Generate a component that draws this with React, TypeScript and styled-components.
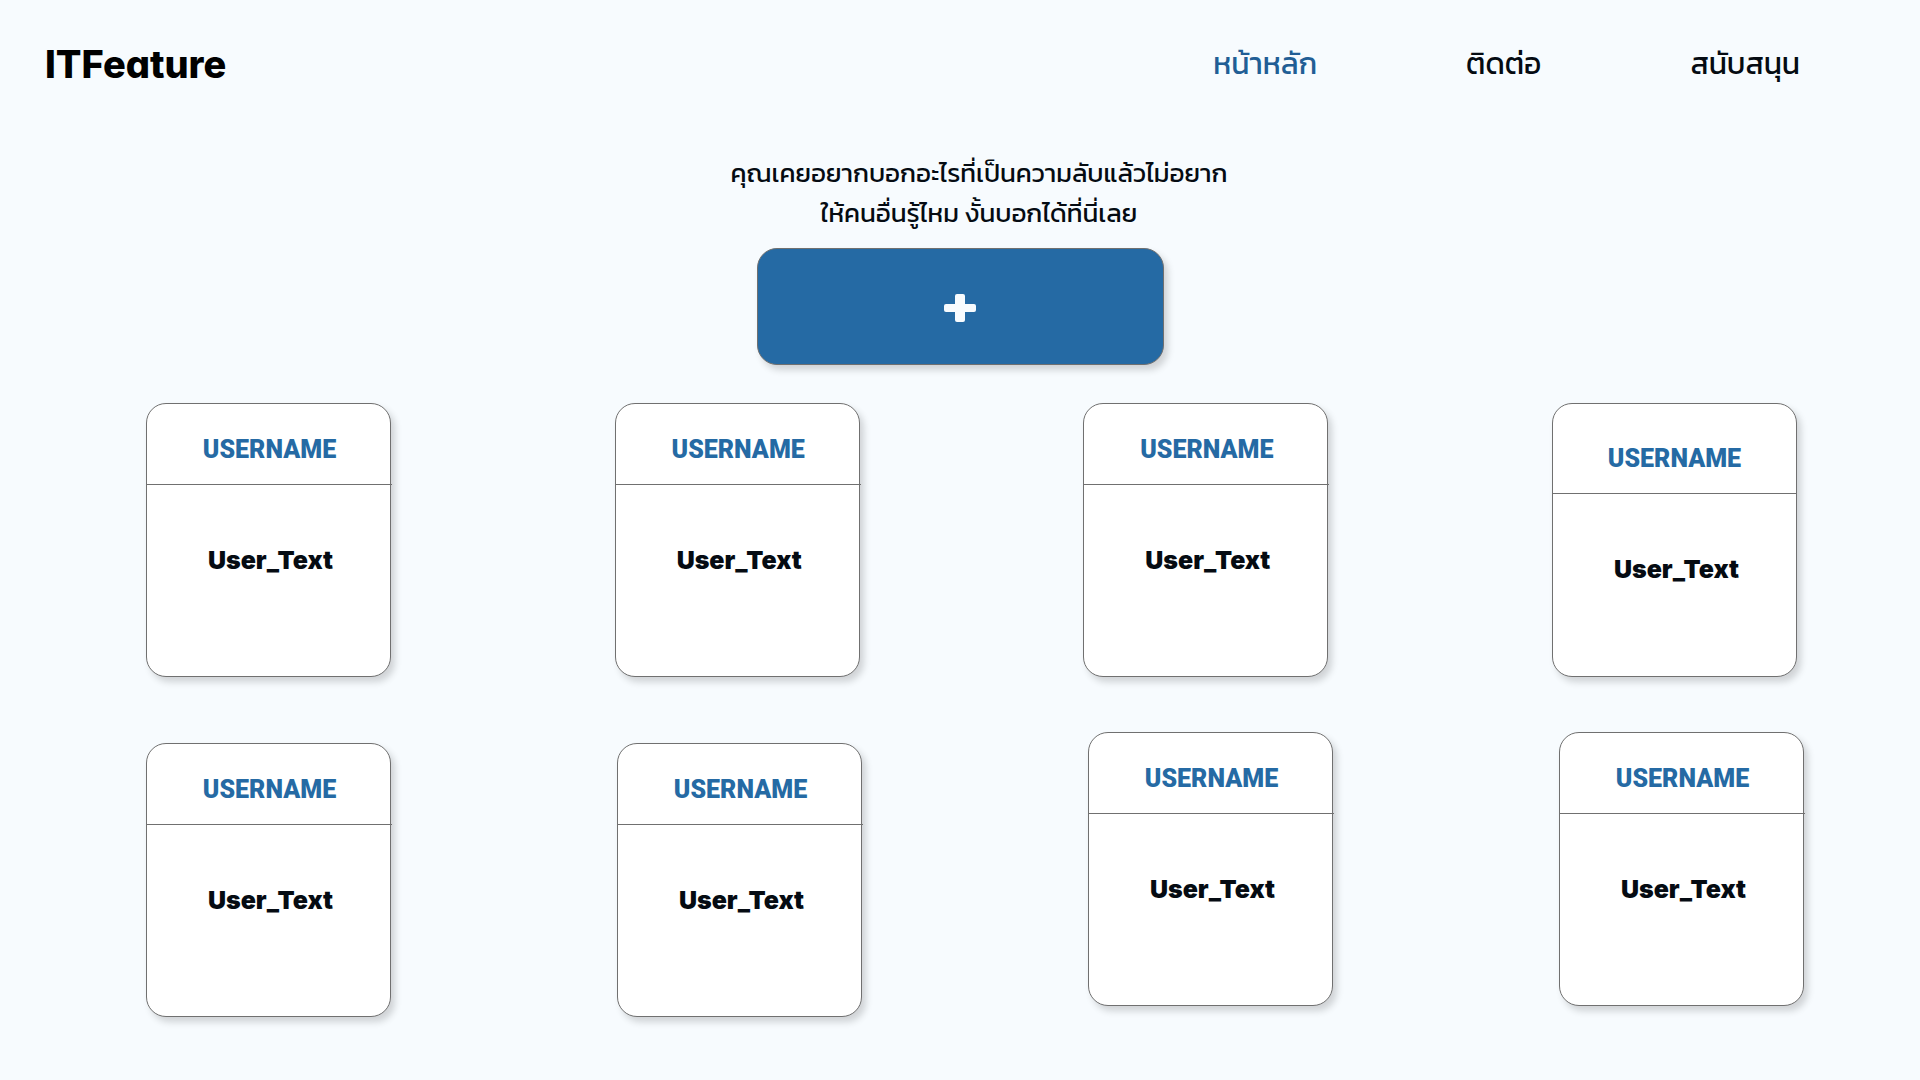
import React from "react";
import styled, { createGlobalStyle } from "styled-components";

const thaiFont = `"Kanit", "Noto Sans Thai", "DejaVu Sans", "Noto Sans", sans-serif`;

const GlobalStyle = createGlobalStyle`
  *, *::before, *::after { box-sizing: border-box; }
  body {
    margin: 0;
    background: #f7fbfe;
    color: #050b12;
    font-family: ${thaiFont};
  }
  h1, h2, p { margin: 0; }
`;

const Page = styled.div`
  min-height: 100vh;
  padding-bottom: 62px;
`;

const TopBar = styled.header`
  display: flex;
  align-items: center;
  justify-content: space-between;
  height: 128px;
  padding: 0 120px 0 45px;
`;

const Logo = styled.h1`
  font: 800 38px/48px Inter, sans-serif;
  font-feature-settings: "cv11";
  color: #000;
`;

const Nav = styled.nav`
  display: flex;
  gap: 149px;
`;

const NavLink = styled.a<{ $active?: boolean }>`
  font-size: 30px;
  line-height: 48px;
  font-weight: 400;
  text-decoration: none;
  color: ${(p) => (p.$active ? "#215e95" : "#050b12")};
`;

const Intro = styled.section`
  display: flex;
  flex-direction: column;
  align-items: center;
  padding-top: 25px;
`;

const IntroText = styled.p`
  padding: 0 0 15px 38px;
  font-size: 26px;
  line-height: 40px;
  font-weight: 400;
  text-align: center;
`;

const AddButton = styled.button`
  display: grid;
  place-items: center;
  width: 407px;
  height: 117px;
  padding: 2px 0 0;
  border: 1px solid #707070;
  border-radius: 20px;
  background: #256aa4;
  color: #f7fbfe;
  box-shadow: 4px 5px 7px rgba(0, 0, 0, 0.16);
  cursor: pointer;
`;

const Board = styled.main`
  display: flex;
  flex-direction: column;
  gap: 66px;
  padding-top: 38px;
`;

const Row = styled.section<{ $end: number }>`
  display: flex;
  justify-content: space-between;
  padding: 0 ${(p) => p.$end}px 0 146px;
`;

const Card = styled.article<{ $raised?: boolean }>`
  width: 245px;
  height: 274px;
  margin-top: ${(p) => (p.$raised ? -11 : 0)}px;
  border: 1px solid #707070;
  border-radius: 20px;
  background: #fff;
  box-shadow: 4px 5px 7px rgba(0, 0, 0, 0.16);
`;

const CardHeader = styled.header<{ $tall?: boolean }>`
  display: flex;
  align-items: flex-end;
  justify-content: center;
  height: ${(p) => (p.$tall ? 90 : 81)}px;
  margin-right: ${(p) => (p.$tall ? 0 : -2)}px;
  padding-bottom: 16px;
  border-bottom: 1px solid #707070;
`;

const Username = styled.h2`
  font: 900 25px/36px Roboto, sans-serif;
  color: #256aa4;
`;

const UserText = styled.p`
  padding: 57px 0 0 4px;
  font: 900 25px/36px Inter, sans-serif;
  text-align: center;
`;

type Post = { id: number; raised?: boolean; tall?: boolean };

const rows: { end: number; posts: Post[] }[] = [
  { end: 123, posts: [{ id: 1 }, { id: 2 }, { id: 3 }, { id: 4, tall: true }] },
  {
    end: 116,
    posts: [{ id: 5 }, { id: 6 }, { id: 7, raised: true }, { id: 8, raised: true }],
  },
];

function PlusIcon() {
  return (
    <svg width="32" height="28" viewBox="0 0 32 28" fill="currentColor" aria-hidden="true">
      <rect x="11" y="0" width="10" height="28" rx="2" />
      <rect x="0" y="10" width="32" height="8" rx="2" />
    </svg>
  );
}

export default function App() {
  return (
    <Page>
      <GlobalStyle />
      <TopBar>
        <Logo>ITFeature</Logo>
        <Nav>
          <NavLink href="#home" $active>หน้าหลัก</NavLink>
          <NavLink href="#contact">ติดต่อ</NavLink>
          <NavLink href="#support">สนับสนุน</NavLink>
        </Nav>
      </TopBar>
      <Intro>
        <IntroText>
          คุณเคยอยากบอกอะไรที่เป็นความลับแล้วไม่อยาก
          <br />
          ให้คนอื่นรู้ไหม งั้นบอกได้ที่นี่เลย
        </IntroText>
        <AddButton type="button" aria-label="+">
          <PlusIcon />
        </AddButton>
      </Intro>
      <Board>
        {rows.map((row) => (
          <Row key={row.end} $end={row.end}>
            {row.posts.map((post) => (
              <Card key={post.id} $raised={post.raised}>
                <CardHeader $tall={post.tall}>
                  <Username>USERNAME</Username>
                </CardHeader>
                <UserText>User_Text</UserText>
              </Card>
            ))}
          </Row>
        ))}
      </Board>
    </Page>
  );
}
